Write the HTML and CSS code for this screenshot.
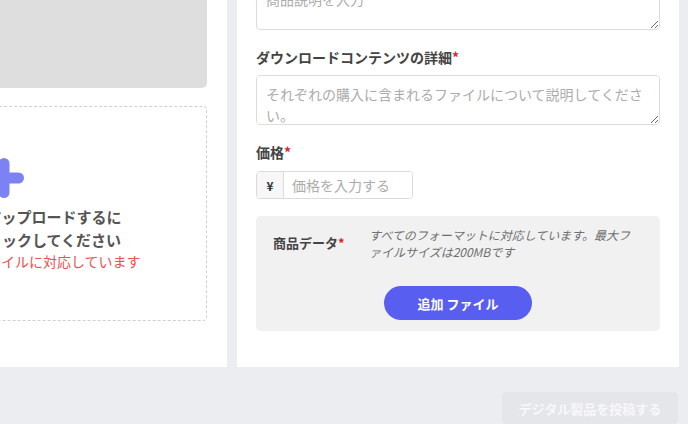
FILE: index.html
```html
<!DOCTYPE html>
<html lang="ja">
<head>
<meta charset="utf-8">
<title>デジタル製品を投稿する</title>
<link rel="stylesheet" href="styles.css">
</head>
<body>
<div class="page">
  <div class="columns">
    <section class="card media-card">
      <div class="preview"></div>
      <div class="dropzone">
        <svg class="plus" width="40" height="40" viewBox="0 0 40 40" aria-hidden="true">
          <path d="M20 5.5V34.5M5.5 20H34.5" stroke="#7c82f3" stroke-width="11" stroke-linecap="round" fill="none"/>
        </svg>
        <p class="drop-title">画像ファイルをアップロードするに<br>は、こちらをクリックしてください</p>
        <p class="drop-note">すべてのタイプのファイルに対応しています</p>
      </div>
    </section>

    <section class="card form-card">
      <div class="field">
        <label class="label">商品説明<span class="req">*</span></label>
        <textarea class="textarea" placeholder="商品説明を入力"></textarea>
      </div>
      <div class="field">
        <label class="label">ダウンロードコンテンツの詳細<span class="req">*</span></label>
        <textarea class="textarea" placeholder="それぞれの購入に含まれるファイルについて説明してください。"></textarea>
      </div>
      <div class="field">
        <label class="label">価格<span class="req">*</span></label>
        <div class="price-group">
          <span class="addon">¥</span>
          <input class="price-input" type="text" placeholder="価格を入力する">
        </div>
      </div>
      <div class="data-box">
        <div class="data-row">
          <div class="data-label">商品データ<span class="req">*</span></div>
          <div class="data-desc">すべてのフォーマットに対応しています。最大ファイルサイズは200MBです</div>
        </div>
        <button class="add-btn" type="button">追加 ファイル</button>
      </div>
    </section>
  </div>
  <div class="footer">
    <button class="submit-btn" type="button" disabled>デジタル製品を投稿する</button>
  </div>
</div>
</body>
</html>
```
FILE: styles.css
```css
html, body {
  margin: 0;
  padding: 0;
  overflow: hidden;
  height: 100%;
}
body {
  background: #ecedf1;
  font-family: "Noto Sans CJK JP", "Noto Sans", sans-serif;
  color: #444;
}
.page {
  margin-top: -68px;
  margin-left: -220px;
  padding-right: 9px;
}
.columns {
  display: flex;
  gap: 10px;
  align-items: stretch;
}
.card {
  background: #fff;
  box-sizing: border-box;
}
.media-card {
  flex: 0 0 447px;
  padding: 20px;
  display: flex;
  flex-direction: column;
  gap: 18px;
}
.preview {
  height: 136px;
  background: #dedede;
  border-radius: 5px;
}
.dropzone {
  height: 215px;
  box-sizing: border-box;
  border: 1px dashed #cfcfcf;
  border-radius: 4px;
  display: flex;
  flex-direction: column;
  align-items: center;
  justify-content: center;
  text-align: center;
  padding-right: 4px;
}
.plus {
  display: block;
  margin-top: 2px;
  margin-left: 4px;
}
.drop-title {
  margin: 7px 0 0;
  font-size: 15px;
  line-height: 23px;
  font-weight: 700;
  color: #555;
}
.drop-note {
  margin: 0;
  font-size: 14px;
  line-height: 20px;
  color: #f04f52;
}
.form-card {
  flex: 0 0 442px;
  padding: 20px 19px 36px;
}
.field {
  display: flex;
  flex-direction: column;
  margin-bottom: 17px;
}
.label {
  font-size: 14px;
  line-height: 20px;
  font-weight: 700;
  color: #444;
  margin-bottom: 8px;
}
.req {
  color: #e0242b;
}
.textarea {
  box-sizing: border-box;
  height: 50px;
  width: 100%;
  border: 1px solid #dcdcdc;
  border-radius: 4px;
  padding: 8px 9px;
  font-family: inherit;
  font-size: 14px;
  line-height: 21px;
  color: #444;
  margin: 0;
}
.textarea::placeholder,
.price-input::placeholder {
  color: #acacac;
}
.price-group {
  display: flex;
  width: 157px;
  height: 28px;
  box-sizing: border-box;
  border: 1px solid #dcdcdc;
  border-radius: 4px;
  overflow: hidden;
  margin-top: 1px;
}
.addon {
  flex: 0 0 26px;
  display: flex;
  align-items: center;
  justify-content: center;
  background: #f7f7f7;
  border-right: 1px solid #dcdcdc;
  font-size: 12px;
  font-weight: 700;
  color: #333;
}
.price-input {
  flex: 1;
  min-width: 0;
  border: 0;
  outline: 0;
  padding: 0 8px;
  font-family: inherit;
  font-size: 14px;
  color: #444;
  background: #fff;
}
.data-box {
  background: #f1f1f2;
  border-radius: 5px;
  padding: 10px 17px 11px;
  display: flex;
  flex-direction: column;
}
.data-row {
  display: flex;
  align-items: center;
}
.data-label {
  flex: 0 0 96px;
  font-size: 13px;
  font-weight: 700;
  color: #444;
  line-height: 20px;
}
.data-desc {
  flex: 0 1 266px;
  font-size: 12px;
  line-height: 17px;
  font-style: italic;
  color: #6f6f6f;
}
.add-btn {
  align-self: center;
  margin-top: 26px;
  width: 148px;
  height: 34px;
  border: 0;
  border-radius: 17px;
  background: #585ef0;
  color: #fff;
  font-family: inherit;
  font-size: 13px;
  font-weight: 700;
  padding: 0;
}
.footer {
  display: flex;
  justify-content: flex-end;
  padding-top: 25px;
  padding-right: 1px;
}
.submit-btn {
  width: 176px;
  height: 32px;
  border: 0;
  border-radius: 4px;
  background: #e5e6ea;
  color: #f8f8fa;
  font-family: inherit;
  font-size: 13px;
  font-weight: 700;
  padding: 0;
}
```
